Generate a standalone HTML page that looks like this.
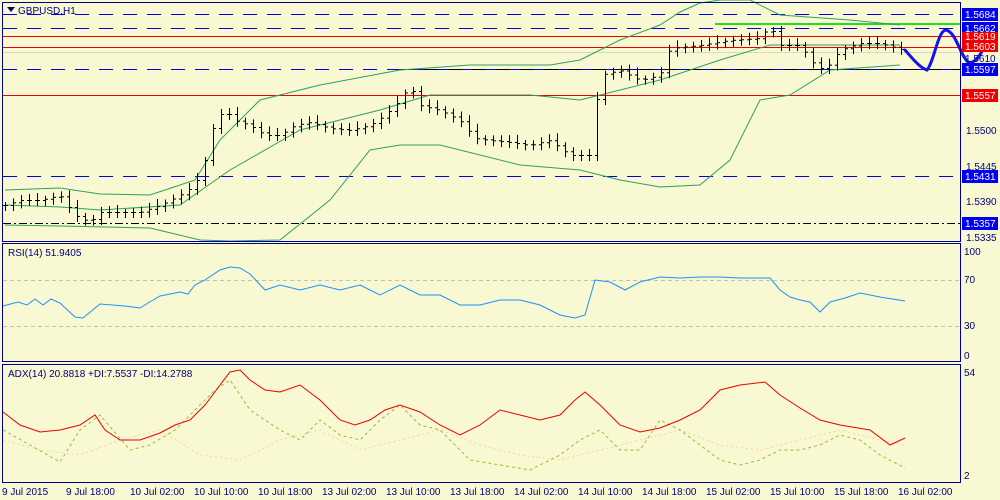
<!DOCTYPE html>
<html><head><meta charset="utf-8"><style>
body{margin:0;width:1000px;height:500px;background:#F8F8D2;overflow:hidden;font-family:"Liberation Sans",sans-serif}
svg{position:absolute;left:0;top:0}
</style></head><body>
<svg width="1000" height="500" xmlns="http://www.w3.org/2000/svg" font-family="Liberation Sans, sans-serif" font-size="10">
<rect width="1000" height="500" fill="#F8F8D2"/>
<g fill="none" stroke-width="1">
<!-- main panel lines -->
<line x1="3" y1="14.5" x2="960" y2="14.5" stroke="#0000E0" stroke-dasharray="14,10"/>
<line x1="3" y1="28.5" x2="960" y2="28.5" stroke="#0000E0" stroke-dasharray="14,10"/>
<line x1="3" y1="36.5" x2="960" y2="36.5" stroke="#F00000"/>
<line x1="3" y1="47.5" x2="960" y2="47.5" stroke="#F00000"/>
<line x1="3" y1="52.5" x2="960" y2="52.5" stroke="#D8D8C8"/>
<line x1="3" y1="69.5" x2="960" y2="69.5" stroke="#0000E0" stroke-dasharray="14,10"/>
<line x1="400" y1="69.5" x2="960" y2="69.5" stroke="#000" stroke-dasharray="14,10"/>
<line x1="3" y1="95.5" x2="960" y2="95.5" stroke="#F00000"/>
<line x1="3" y1="176.5" x2="960" y2="176.5" stroke="#0000E0" stroke-dasharray="14,10"/>
<line x1="3" y1="223.5" x2="960" y2="223.5" stroke="#000" stroke-dasharray="8,3,2,3"/>
<line x1="715" y1="24" x2="960" y2="24" stroke="#20E020" stroke-width="2"/>
<!-- bollinger -->
<polyline stroke="#30A060" points="5,190 60,188 100,194 150,195 180,185 195,180 220,140 260,100 320,85 400,70 470,65 550,65 580,60 620,40 660,25 680,12 700,3 720,0 750,0 780,15 850,20 900,25"/>
<polyline stroke="#30A060" points="5,205 60,207 100,210 180,205 230,170 300,130 380,110 430,95 530,95 580,100 600,95 660,80 720,60 770,45 830,45 900,45"/>
<polyline stroke="#30A060" points="5,225 60,226 150,228 200,240 230,241 280,240 330,200 370,150 400,145 440,145 520,165 580,170 620,180 660,187 700,185 730,160 760,100 790,95 830,70 900,65"/>
<!-- price path candles -->
<g id="candles" stroke="#000"></g>
<!-- hand drawn -->
<path d="M905,50 C912,58 920,68 927,70 C934,62 938,30 946,30 C956,32 960,55 968,62 C978,66 988,40 992,28" stroke="#1414E6" stroke-width="3" stroke-linecap="round"/>
<!-- RSI -->
<line x1="3" y1="280.5" x2="960" y2="280.5" stroke="#C0C0C0" stroke-dasharray="4,3"/>
<line x1="3" y1="326.5" x2="960" y2="326.5" stroke="#C0C0C0" stroke-dasharray="4,3"/>
<polyline stroke="#1E90FF" points="3,306 18,302 27,305 35,299 43,305 51,299 60,303 75,317 83,318 100,304 125,306 140,308 148,303 160,296 180,292 188,294 195,285 205,280 220,270 230,267 240,268 250,274 265,290 280,285 300,290 320,285 340,290 360,285 380,295 400,285 420,295 440,295 460,305 480,305 500,300 520,300 540,305 560,315 575,318 585,315 595,280 610,282 625,290 640,282 660,277 680,278 700,277 720,277 740,278 770,278 780,290 790,297 800,300 810,302 820,312 830,302 845,298 860,293 880,297 905,301"/>
<!-- ADX -->
<polyline stroke="#FAD0A8" stroke-dasharray="2,3" points="3,440 40,450 80,455 120,440 160,430 200,455 240,460 280,440 320,430 360,450 400,440 440,430 480,445 520,455 560,460 600,450 640,440 680,430 720,445 760,450 800,440 840,430 880,440 905,445"/>
<polyline stroke="#90C030" stroke-dasharray="3,3" points="3,430 30,445 60,462 80,430 100,415 130,450 150,445 175,430 195,410 215,390 230,380 250,410 280,430 300,440 320,420 340,435 360,440 380,420 400,405 420,425 440,430 470,460 500,465 530,470 560,455 580,440 600,430 620,450 640,450 660,420 680,430 700,445 720,460 740,465 760,460 780,450 800,450 820,445 840,435 860,440 880,455 905,468"/>
<polyline stroke="#F00000" points="3,412 20,425 40,432 60,430 80,425 95,415 105,430 120,440 140,440 160,433 175,425 190,420 205,405 220,385 230,372 240,370 250,380 265,390 280,392 300,385 320,400 340,420 355,425 370,420 385,410 400,405 420,412 440,425 460,435 480,425 500,410 520,415 540,420 560,415 575,400 585,392 600,405 620,425 640,432 660,428 680,420 700,410 720,390 740,385 765,382 780,395 800,408 820,420 840,425 870,430 890,445 905,438"/>
<!-- frames -->
<rect x="2.5" y="2.5" width="958" height="239" stroke="#000090"/>
<rect x="2.5" y="243.5" width="958" height="118" stroke="#000090"/>
<rect x="2.5" y="364.5" width="958" height="118" stroke="#000090"/>
</g>
<path d="M7,7 h8 l-4,5z" fill="#000080"/>
<text x="18" y="14" fill="#000080">GBPUSD,H1</text>
<text x="8" y="256" fill="#000080">RSI(14) 51.9405</text>
<text x="8" y="377" fill="#000080">ADX(14) 20.8818 +DI:7.5537 -DI:14.2788</text>
<!-- right axis -->
<g fill="#000080">
<rect x="962" y="8" width="36" height="13" fill="#0000F0"/><text x="965" y="18" fill="#fff">1.5684</text>
<rect x="962" y="22" width="36" height="12" fill="#0000F0"/><text x="965" y="32" fill="#fff">1.5662</text>
<rect x="962" y="32" width="36" height="10" fill="#F00000"/><text x="965" y="40" fill="#fff">1.5619</text>
<rect x="962" y="41" width="36" height="11" fill="#F00000"/><text x="965" y="50" fill="#fff">1.5603</text>
<text x="965" y="62">1.5610</text>
<rect x="962" y="63" width="36" height="13" fill="#0000F0"/><text x="965" y="73" fill="#fff">1.5597</text>
<rect x="962" y="89" width="36" height="13" fill="#F00000"/><text x="965" y="99" fill="#fff">1.5557</text>
<text x="966" y="134">1.5500</text>
<text x="966" y="170">1.5445</text>
<rect x="962" y="170" width="36" height="13" fill="#0000F0"/><text x="965" y="180" fill="#fff">1.5431</text>
<text x="966" y="205">1.5390</text>
<rect x="962" y="217" width="36" height="13" fill="#0000F0"/><text x="965" y="227" fill="#fff">1.5357</text>
<text x="966" y="241">1.5335</text>
<text x="964" y="255">100</text><text x="964" y="283">70</text><text x="964" y="329">30</text><text x="964" y="359">0</text>
<text x="964" y="376">54</text><text x="964" y="479">2</text>
</g>
<g fill="#000080" font-size="10">
<text x="2" y="495">9 Jul 2015</text><text x="66" y="495">9 Jul 18:00</text><text x="130" y="495">10 Jul 02:00</text><text x="194" y="495">10 Jul 10:00</text><text x="258" y="495">10 Jul 18:00</text><text x="322" y="495">13 Jul 02:00</text><text x="386" y="495">13 Jul 10:00</text><text x="450" y="495">13 Jul 18:00</text><text x="514" y="495">14 Jul 02:00</text><text x="578" y="495">14 Jul 10:00</text><text x="642" y="495">14 Jul 18:00</text><text x="706" y="495">15 Jul 02:00</text><text x="770" y="495">15 Jul 10:00</text><text x="834" y="495">15 Jul 18:00</text><text x="898" y="495">16 Jul 02:00</text>
</g>
</svg>
<script>
var pts=[[5,205],[20,200],[40,200],[60,195],[75,215],[90,222],[100,212],[120,212],[140,212],[160,205],[180,195],[195,185],[205,160],[215,120],[225,110],[235,120],[250,125],[265,135],[280,135],[295,125],[310,122],[330,128],[350,130],[370,125],[385,115],[400,100],[410,85],[420,105],[440,110],[460,120],[475,138],[490,140],[510,142],[530,145],[550,140],[570,155],[590,155],[600,75],[620,70],[640,80],[660,75],[670,48],[700,45],[730,40],[760,38],[770,25],[780,45],[800,45],[815,65],[825,70],[840,50],[860,43],[880,43],[905,50]];
function f(x){for(var i=0;i<pts.length-1;i++){if(x<=pts[i+1][0]){var a=pts[i],b=pts[i+1];return a[1]+(b[1]-a[1])*(x-a[0])/(b[0]-a[0]);}}return 50;}
var g=document.getElementById('candles'),s='',prev=f(5);
for(var x=5;x<=905;x+=8){var c=f(x),o=prev,h=Math.min(o,c)-3-(x*7%5),l=Math.max(o,c)+3+(x*3%4);
s+='<line x1="'+(x+.5)+'" y1="'+h+'" x2="'+(x+.5)+'" y2="'+l+'"/><line x1="'+(x-2)+'" y1="'+(o+.5)+'" x2="'+x+'" y2="'+(o+.5)+'"/><line x1="'+(x+1)+'" y1="'+(c+.5)+'" x2="'+(x+3)+'" y2="'+(c+.5)+'"/>';prev=c;}
g.innerHTML=s;
</script>
</body></html>
